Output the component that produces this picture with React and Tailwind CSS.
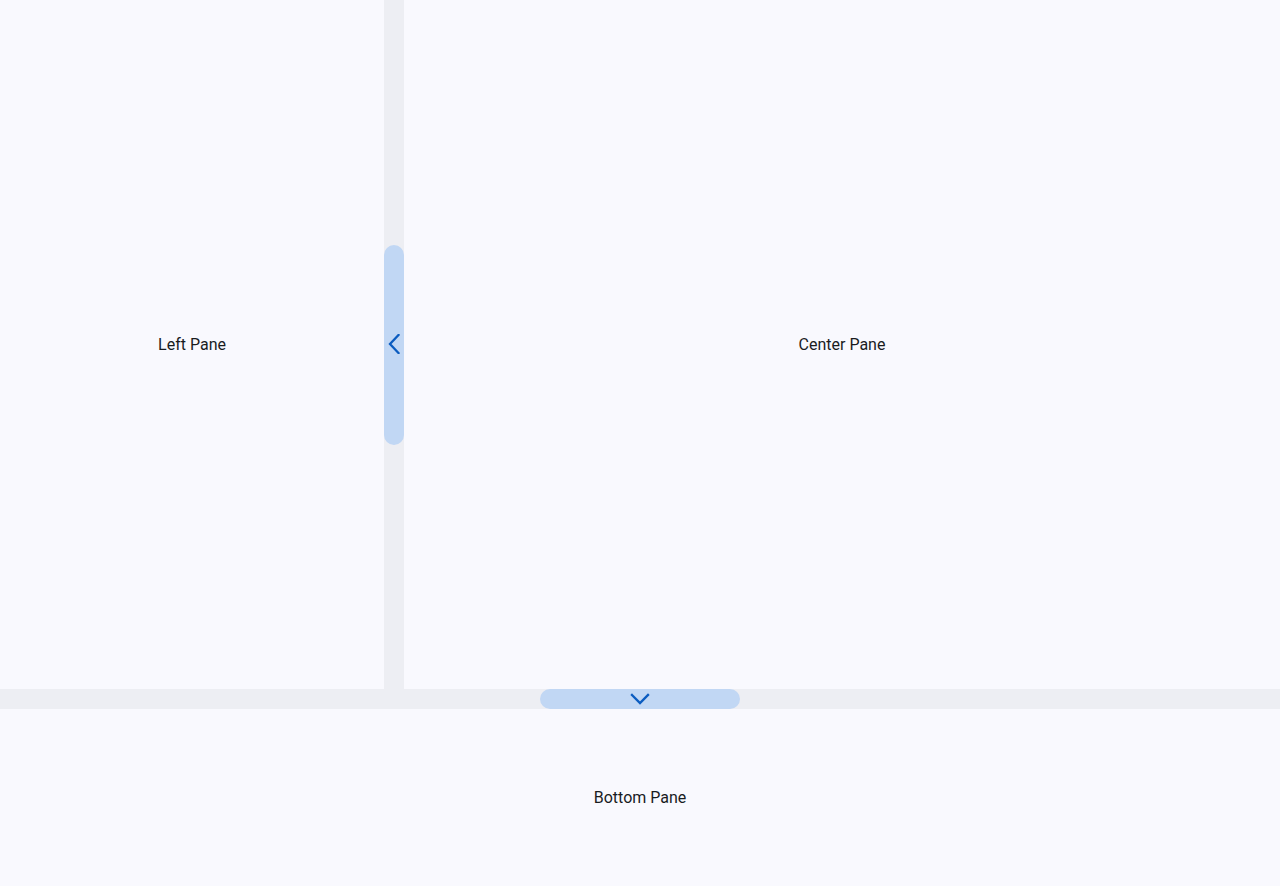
import React from 'react';

// Split layout: left + center panes on top, bottom pane under a horizontal splitter.
function ChevronLeft() {
  return (
    <svg width="12" height="20" viewBox="0 0 12 20" fill="none" className="-mt-[2px]">
      <polyline points="10.5,1 2,10 10.5,19" stroke="#0b5cc0" strokeWidth="2.3" strokeLinecap="square" />
    </svg>
  );
}

function ChevronDown() {
  return (
    <svg width="20" height="12" viewBox="0 0 20 12" fill="none">
      <polyline points="2,2 10,10 18,2" stroke="#0b5cc0" strokeWidth="2.3" strokeLinecap="square" />
    </svg>
  );
}

export default function App() {
  return (
    <div
      className="w-[1280px] h-[886px] flex flex-col bg-[#f9f9fe] text-[#1a1c1e] text-base"
      style={{ fontFamily: 'Roboto, "Noto Sans", sans-serif' }}
    >
      <div className="h-[689px] flex">
        <div className="w-[384px] flex items-center justify-center">Left Pane</div>
        <div className="w-[20px] bg-[#edeef3] flex items-center justify-center">
          <button className="w-[20px] h-[200px] rounded-full bg-[#c1d7f4] flex items-center justify-center">
            <ChevronLeft />
          </button>
        </div>
        <div className="flex-1 flex items-center justify-center">Center Pane</div>
      </div>
      <div className="h-[20px] bg-[#edeef3] flex items-center justify-center">
        <button className="w-[200px] h-[20px] rounded-full bg-[#c1d7f4] flex items-center justify-center">
          <ChevronDown />
        </button>
      </div>
      <div className="flex-1 flex items-center justify-center">Bottom Pane</div>
    </div>
  );
}
